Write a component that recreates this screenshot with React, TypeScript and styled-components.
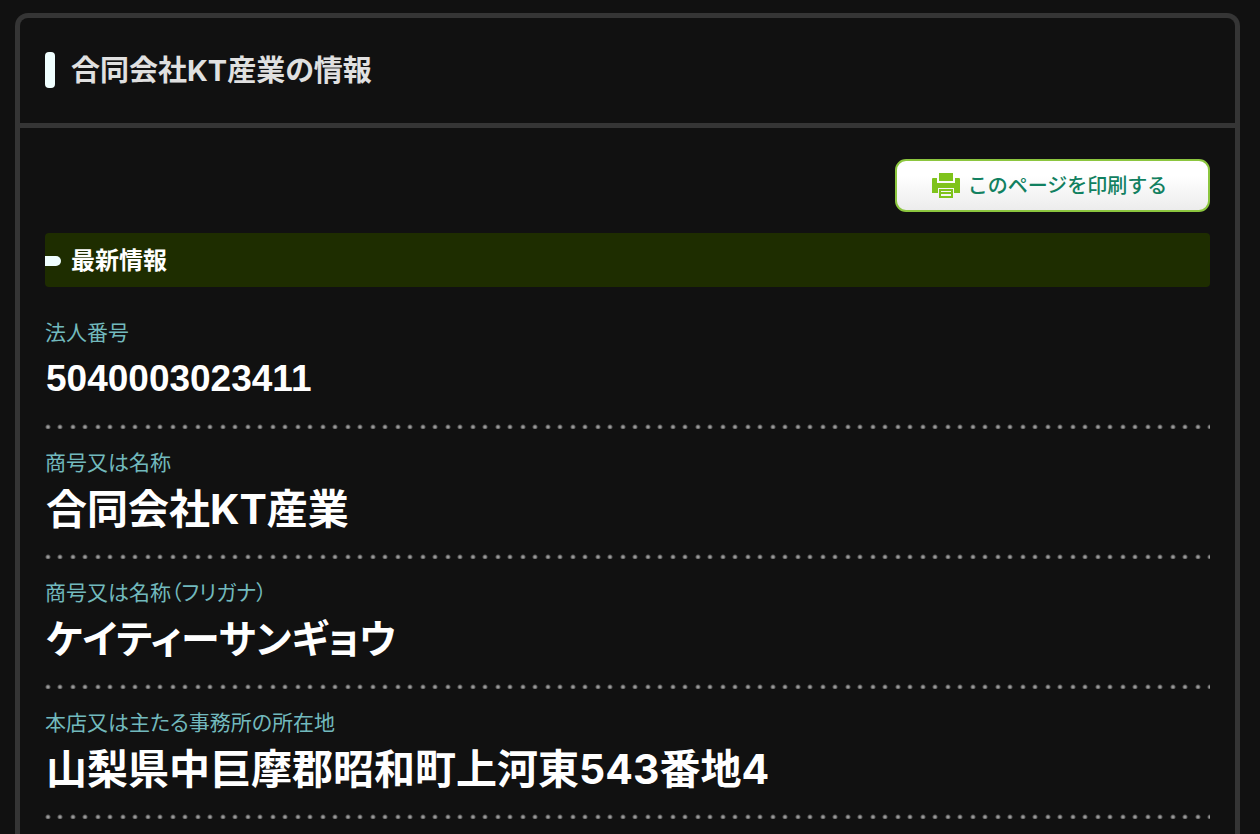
import React from "react";
import styled, { createGlobalStyle, css } from "styled-components";

const GlobalStyle = createGlobalStyle`
  *, *::before, *::after { box-sizing: border-box; }
  body {
    margin: 0;
    background: #111;
    color: #fff;
    font-family: Inter, "Noto Sans CJK JP", sans-serif;
    font-feature-settings: "palt";
  }
`;

const Panel = styled.main`
  margin: 13px 20px 0 15px;
  min-height: calc(100vh - 13px);
  border: 5px solid #353535;
  border-bottom: 0;
  border-radius: 13px 13px 0 0;
`;

const PanelHeader = styled.header`
  display: flex;
  align-items: center;
  gap: 16px;
  height: 110px;
  padding: 0 25px 2px;
  border-bottom: 5px solid #353535;

  &::before {
    content: "";
    width: 10px;
    height: 36px;
    border-radius: 4px;
    background: #f0ffff;
  }
`;

const Title = styled.h1`
  margin: 0;
  padding-top: 2px;
  color: #e0e0e0;
  font-size: 29px;
  font-weight: 700;
  line-height: 40px;
`;

const PanelBody = styled.div`
  padding: 31px 25px 0;
`;

const Toolbar = styled.div`
  display: flex;
  justify-content: flex-end;
  margin-bottom: 21px;
`;

const PrintButton = styled.button`
  display: flex;
  align-items: center;
  justify-content: center;
  gap: 8px;
  width: 315px;
  height: 53px;
  padding: 0 6px 0 0;
  border: 2px solid #8cc63f;
  border-radius: 11px;
  background: linear-gradient(#fff 30%, #ececec);
  color: #118060;
  font-family: inherit;
  font-size: 20px;
  font-weight: 500;
  font-feature-settings: normal;
  line-height: 28px;
  cursor: pointer;
`;

const SectionTitle = styled.h2`
  display: flex;
  align-items: center;
  gap: 10px;
  height: 54px;
  margin: 0 0 12px;
  padding-top: 2px;
  border-radius: 4px;
  background: #1e2d00;
  font-size: 24px;
  font-weight: 700;
  line-height: 32px;

  &::before {
    content: "";
    width: 16px;
    height: 10px;
    border-radius: 0 5px 5px 0;
    background: #f0ffff;
  }
`;

const Details = styled.dl`
  margin: 0;
`;

const Entry = styled.div`
  height: 130px;
  padding-top: 20px;
  background-image:
    radial-gradient(circle at 3px 3px, #999 1px, transparent 3px),
    radial-gradient(circle at 15px 3px, #999 1px, transparent 3px);
  background-size: 25px 5px;
  background-position: left bottom;
  background-repeat: repeat-x;
`;

const Label = styled.dt`
  color: #72b9bd;
  font-size: 21px;
  font-weight: 400;
  line-height: 28px;
`;

type ValueKind = "text" | "number" | "kana";

const valueStyles = {
  text: css`
    font-size: 41px;
  `,
  number: css`
    font-family: "Liberation Sans", sans-serif;
    font-size: 37px;
  `,
  kana: css`
    font-size: 39px;
  `,
};

const Value = styled.dd<{ $kind: ValueKind }>`
  margin: 0;
  padding-left: 1px;
  font-weight: 700;
  line-height: 64px;
  ${({ $kind }) => valueStyles[$kind]}
`;

const PrinterIcon = () => (
  <svg width="28" height="26" viewBox="0 0 28 26" fill="#7fc31c" aria-hidden="true">
    <path d="M7 0h14v8H7z" />
    <path d="M1 5h4v5h18V5h4a1 1 0 0 1 1 1v14h-6v-5H6v5H0V6a1 1 0 0 1 1-1z" />
    <path fillRule="evenodd" d="M7 16h14v9H7zM9 18v1h10v-1zM9 21v2h10v-2z" />
  </svg>
);

const entries: { label: string; value: string; kind: ValueKind }[] = [
  { label: "法人番号", value: "5040003023411", kind: "number" },
  { label: "商号又は名称", value: "合同会社KT産業", kind: "text" },
  { label: "商号又は名称（フリガナ）", value: "ケイティーサンギョウ", kind: "kana" },
  { label: "本店又は主たる事務所の所在地", value: "山梨県中巨摩郡昭和町上河東543番地4", kind: "text" },
];

export default function App() {
  return (
    <>
      <GlobalStyle />
      <Panel lang="ja">
        <PanelHeader>
          <Title>合同会社KT産業の情報</Title>
        </PanelHeader>
        <PanelBody>
          <Toolbar>
            <PrintButton type="button" onClick={() => window.print()}>
              <PrinterIcon />
              このページを印刷する
            </PrintButton>
          </Toolbar>
          <section>
            <SectionTitle>最新情報</SectionTitle>
            <Details>
              {entries.map(({ label, value, kind }) => (
                <Entry key={label}>
                  <Label>{label}</Label>
                  <Value $kind={kind}>{value}</Value>
                </Entry>
              ))}
            </Details>
          </section>
        </PanelBody>
      </Panel>
    </>
  );
}
